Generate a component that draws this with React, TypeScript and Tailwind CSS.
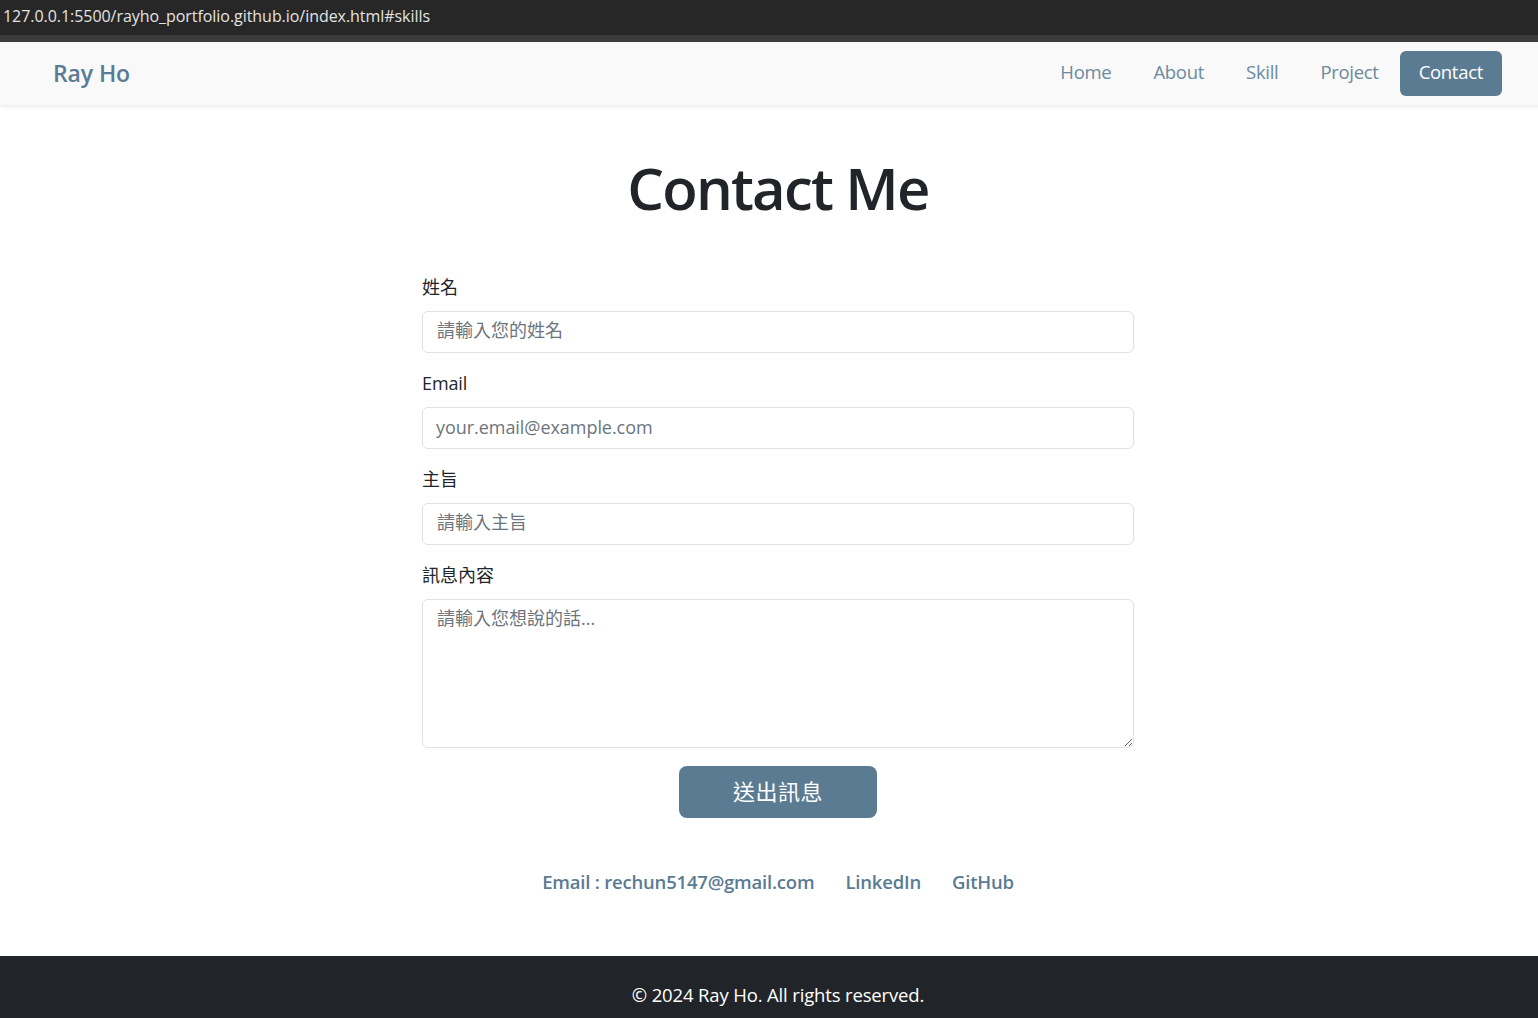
import React from "react";

const font = { fontFamily: '"Open Sans", "Noto Sans CJK TC", sans-serif' };

export default function App() {
  return (
    <div className="w-full overflow-hidden bg-white" style={font}>
      <div className="w-[1556px]">
        <div className="h-[35px] bg-[#272727] flex items-start pt-[4px] pl-[3px] text-[16px] leading-[24px] text-[#e3e3e3] tracking-[-0.05px]">
          127.0.0.1:5500/rayho_portfolio.github.io/index.html#skills
        </div>
        <div className="h-[7px] bg-[#3c3c3c]" />
        <nav className="h-[63px] bg-[#f9f9f9] shadow-[0_2px_4px_rgba(0,0,0,0.08)] flex items-center justify-between pl-[53px] pr-[54px] pb-[1px] relative z-10">
          <div className="text-[23px] font-semibold text-[#5a7b94] tracking-[-0.1px] pt-[1px]">Ray Ho</div>
          <div className="flex items-center text-[18.5px] text-[#6c8aa0] tracking-[-0.3px]">
            <a className="px-[21px] pb-[2px]">Home</a>
            <a className="px-[21px] pb-[2px]">About</a>
            <a className="px-[21px] pb-[2px]">Skill</a>
            <a className="px-[21px] pb-[2px]">Project</a>
            <a className="h-[45px] px-[19px] pb-[2px] flex items-center rounded-[6px] bg-[#5b7b93] text-white">Contact</a>
          </div>
        </nav>
        <main className="flex flex-col items-center pt-[48px] pb-[61px]">
          <h1 className="text-[58px] font-semibold text-[#212529] leading-[1.2] tracking-[-1.8px]">Contact Me</h1>
          <form className="w-[712px] mt-[52px] flex flex-col text-[#212529]">
            <label className="text-[18px] leading-[24px] mb-[12px]">姓名</label>
            <input className="h-[42px] border border-[#dee2e6] rounded-[6px] px-[14px] pb-[3px] text-[18px] placeholder:text-[#6c757d] outline-none" placeholder="請輸入您的姓名" />
            <label className="text-[18px] leading-[24px] mt-[18px] mb-[12px] tracking-[-0.1px]">Email</label>
            <input className="h-[42px] border border-[#dee2e6] rounded-[6px] px-[13px] pb-[2px] text-[18px] tracking-[-0.05px] placeholder:text-[#6c757d] outline-none" placeholder="your.email@example.com" />
            <label className="text-[18px] leading-[24px] mt-[18px] mb-[12px]">主旨</label>
            <input className="h-[42px] border border-[#dee2e6] rounded-[6px] px-[14px] pb-[3px] text-[18px] placeholder:text-[#6c757d] outline-none" placeholder="請輸入主旨" />
            <label className="text-[18px] leading-[24px] mt-[18px] mb-[12px]">訊息內容</label>
            <textarea className="h-[149px] border border-[#dee2e6] rounded-[6px] px-[14px] pt-[5px] text-[18px] placeholder:text-[#6c757d] outline-none" placeholder="請輸入您想說的話..." />
            <div className="flex justify-center mt-[18px]">
              <button type="button" className="w-[198px] h-[52px] rounded-[8px] bg-[#5b7b93] text-white text-[22px] tracking-[0.5px]">送出訊息</button>
            </div>
          </form>
          <div className="mt-[50px] flex items-center gap-[31px] text-[18.5px] font-semibold text-[#5a7b94] tracking-[-0.2px]">
            <a>Email : rechun5147@gmail.com</a>
            <a>LinkedIn</a>
            <a>GitHub</a>
          </div>
        </main>
        <footer className="bg-[#212529] h-[80px] flex justify-center pt-[25px] text-white text-[18.5px] tracking-[-0.15px]">
          © 2024 Ray Ho. All rights reserved.
        </footer>
      </div>
    </div>
  );
}
